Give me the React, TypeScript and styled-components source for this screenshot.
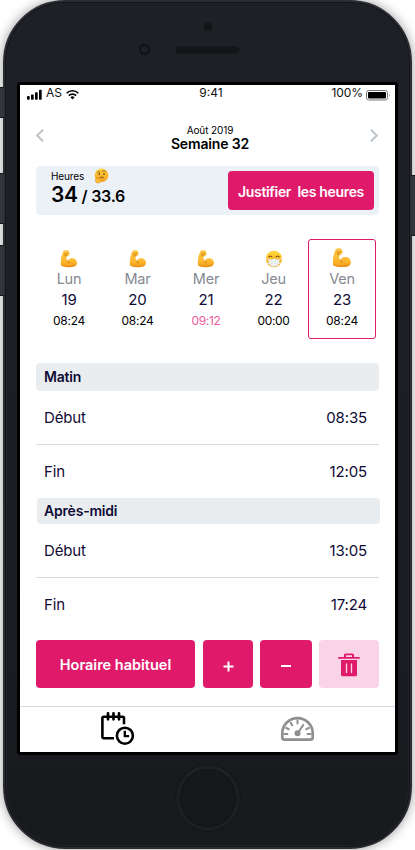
import React from "react";
import styled, { createGlobalStyle, css } from "styled-components";

const pink = "#df1a6b";
const navy = "#100b36";

const Global = createGlobalStyle`
  * { box-sizing: border-box; }
  html, body { margin: 0; padding: 0; background: #fff; overflow: hidden; }
  body { font-family: Inter, "Liberation Sans", sans-serif; color: #000; }
  button { font-family: inherit; border: 0; padding: 0; cursor: pointer; }
  svg { display: block; flex: none; overflow: visible; }
`;

const Stage = styled.div`
  position: relative;
  width: 415px;
  height: 850px;
  overflow: hidden;
  padding-left: 3px;
`;

const SideButton = styled.i<{ $side: "left" | "right"; $top: number; $height: number }>`
  position: absolute;
  ${(p) => p.$side}: 0;
  top: ${(p) => p.$top}px;
  width: 4px;
  height: ${(p) => p.$height}px;
  background: #34353b;
  border-top: 1px solid #17181c;
  border-bottom: 1px solid #17181c;
`;

const Body = styled.div`
  position: relative;
  width: 409px;
  height: 849px;
  border-radius: 62px;
  background: linear-gradient(#1f2025, #1b1c21 80%, #18191d);
  border: 2px solid #2b2d34;
  box-shadow: inset 0 0 0 1px #131417, inset 0 0 0 2px #202227, 0 0 12px rgba(0, 0, 0, 0.4);
  padding: 0 12px;
  display: flex;
  flex-direction: column;
`;

const TopBezel = styled.div`
  height: 80px;
  flex: none;
`;

const Screen = styled.div`
  width: 381px;
  height: 673px;
  flex: none;
  border: 3px solid #000;
  border-radius: 3px;
  background: #fff;
  display: flex;
  flex-direction: column;
`;

const BottomBezel = styled.div`
  flex: 1;
  display: flex;
  justify-content: center;
  padding-top: 10px;
`;

const HomeButton = styled.div`
  width: 64px;
  height: 66px;
  margin-left: 1px;
  border-radius: 50%;
  background: #17181c;
  border: 4px solid #1d1e22;
  border-top-color: #1f2024;
  box-shadow: 0 0 0 1px #141518, inset 0 0 0 1px #111216;
`;

const StatusBar = styled.div`
  height: 18px;
  display: flex;
  align-items: flex-start;
  justify-content: space-between;
  padding: 0 5px 0 7px;
  font-size: 12px;
  line-height: 16px;
  color: #111;
`;

const StatusSide = styled.div<{ $end?: boolean }>`
  width: 120px;
  display: flex;
  justify-content: ${(p) => (p.$end ? "flex-end" : "flex-start")};
  gap: ${(p) => (p.$end ? "3px" : "4px")};
  letter-spacing: ${(p) => (p.$end ? "-0.1px" : "0")};
`;

const StatusTime = styled.span`
  margin-left: 5px;
`;

const WeekNav = styled.header`
  height: 63px;
  display: flex;
  justify-content: space-between;
  padding: 26px 17px 0 16px;
`;

const NavButton = styled.button`
  background: none;
  height: 13px;
`;

const WeekTitle = styled.div`
  margin: -6px 0 0 6px;
  display: flex;
  flex-direction: column;
  align-items: center;
`;

const Month = styled.span`
  font-size: 10px;
  line-height: 14px;
  letter-spacing: -0.1px;
`;

const Week = styled.strong`
  font-size: 14px;
  line-height: 14px;
  font-weight: 600;
  letter-spacing: -0.15px;
`;

const Summary = styled.section`
  height: 49px;
  margin: 0 16px;
  padding: 5px 5px 5px 15px;
  border-radius: 4px;
  background: #ecf1f8;
  display: flex;
  justify-content: space-between;
`;

const SummaryLabel = styled.div`
  display: flex;
  gap: 10px;
  height: 12px;
  font-size: 10px;
  line-height: 12px;
  margin-top: -1px;
  letter-spacing: -0.1px;

  svg {
    margin-top: -2px;
  }
`;

const Total = styled.div`
  font-weight: 600;
  font-size: 16px;
  line-height: 24px;
  margin-top: 1px;
  white-space: pre;
  letter-spacing: -0.25px;
`;

const TotalDone = styled.span`
  font-size: 21px;
  letter-spacing: -0.3px;
`;

const buttonBase = css`
  background: ${pink};
  color: #fff;
  border-radius: 4px;
  font-weight: 600;
  font-size: 14px;
`;

const JustifyButton = styled.button`
  ${buttonBase}
  width: 146px;
  height: 39px;
  white-space: pre;
  padding-top: 2px;
  font-weight: 600;
  letter-spacing: -0.33px;
`;

const Days = styled.section`
  height: 100px;
  margin: 24px 19px 0 15px;
  display: grid;
  grid-template-columns: 68px 69px 68px 67px 69px;
  & > :last-child {
    margin-left: 1px;
  }
`;

const DayCard = styled.div<{ $selected?: boolean }>`
  border: 1px solid ${(p) => (p.$selected ? pink : "transparent")};
  border-radius: 3px;
  display: flex;
  flex-direction: column;
  align-items: center;
  padding-top: ${(p) => (p.$selected ? "8px" : "10px")};
`;

const Mood = styled.div<{ $selected?: boolean }>`
  height: ${(p) => (p.$selected ? "21px" : "19px")};
`;

const DayName = styled.span`
  font-size: 14.5px;
  line-height: 20px;
  color: #858991;
  letter-spacing: -0.2px;
`;

const DayNumber = styled.span`
  font-size: 15px;
  line-height: 21px;
  color: ${navy};
  letter-spacing: -0.15px;
`;

const DayHours = styled.span<{ $over?: boolean }>`
  font-size: 12px;
  line-height: 21px;
  color: ${(p) => (p.$over ? "#ec5a9c" : "#000")};
  letter-spacing: -0.3px;
`;

const Period = styled.section`
  margin-left: 16px;
  width: 343px;
`;

const PeriodTitle = styled.h2<{ $compact?: boolean }>`
  margin: 0 0 0 ${(p) => (p.$compact ? 1 : 0)}px;
  width: 343px;
  height: ${(p) => (p.$compact ? 26 : 28)}px;
  line-height: ${(p) => (p.$compact ? 26 : 28)}px;
  padding-left: ${(p) => (p.$compact ? 7 : 8)}px;
  border-radius: 4px;
  background: #e9edf0;
  color: ${navy};
  font-size: 14px;
  font-weight: 600;
  letter-spacing: -0.2px;
`;

const TimeRow = styled.div<{ $divided?: boolean }>`
  display: flex;
  justify-content: space-between;
  align-items: center;
  height: ${(p) => (p.$divided ? 54 : 53)}px;
  padding: 0 12px ${(p) => (p.$divided ? 0 : 1)}px 8px;
  border-bottom: ${(p) => (p.$divided ? "1px solid #d5dbe3" : "0")};
  color: ${navy};
  font-size: 15px;
  letter-spacing: -0.15px;
`;

const Actions = styled.div`
  margin: 9px 16px 0;
  height: 48px;
  display: flex;
`;

const ActionButton = styled.button<{ $width: number; $gap: number; $label?: boolean; $soft?: boolean }>`
  ${buttonBase}
  width: ${(p) => p.$width}px;
  margin-right: ${(p) => p.$gap}px;
  background: ${(p) => (p.$soft ? "#f9d4e6" : pink)};
  display: flex;
  align-items: center;
  justify-content: center;
  padding-top: ${(p) => (p.$label ? 1 : p.$soft ? 2 : 4)}px;
  font-size: 14.5px;
`;

const TabBar = styled.nav`
  margin-top: 18px;
  flex: 1;
  border-top: 1px solid #d3dbe4;
  display: flex;
  padding-left: 81px;
  gap: 146px;
`;

const Tab = styled.a<{ $top: number }>`
  padding-top: ${(p) => p.$top}px;
`;

const BezelDetails = styled.svg`
  position: absolute;
  left: 130px;
  top: 14px;
`;

const Hardware = () => (
  <BezelDetails width="112" height="46">
    <circle cx="73" cy="11" r="5" fill="#141519" stroke="#292a2f" strokeWidth=".5" />
    <circle cx="9.5" cy="33.5" r="6.2" fill="#121317" stroke="#27282d" strokeWidth=".6" />
    <circle cx="9.5" cy="33.5" r="3.3" fill="#1b222a" />
    <rect x="40" y="30" width="65" height="8" rx="4" fill="#141519" stroke="#27282d" strokeWidth=".5" />
  </BezelDetails>
);

const Signal = () => (
  <svg width="15" height="15" fill="#000">
    <rect x="0" y="11" width="2.7" height="3.7" rx=".7" />
    <rect x="4" y="9.5" width="2.7" height="5.2" rx=".7" />
    <rect x="8" y="7.3" width="2.7" height="7.4" rx=".7" />
    <rect x="12" y="4.8" width="2.7" height="9.9" rx=".7" />
  </svg>
);

const Wifi = () => (
  <svg width="13" height="15" viewBox="0 0 13 15" fill="none" stroke="#000" strokeWidth="1.6">
    <path d="M.6 8.2a8.4 8.4 0 0 1 11.8 0M2.8 10.6a5.3 5.3 0 0 1 7.4 0" />
    <path d="M4.4 12.2a3.2 3.2 0 0 1 4.2 0L6.5 14.4Z" fill="#000" stroke="none" />
  </svg>
);

const Battery = () => (
  <svg width="24" height="16">
    <rect x=".5" y="5.5" width="21" height="9.5" rx="2.2" fill="none" stroke="#777" />
    <rect x="2" y="7" width="18" height="6.6" rx="1" />
    <path d="M23 8.8q1.5 1.4 0 3Z" fill="#777" />
  </svg>
);

const Chevron = ({ right }: { right?: boolean }) => (
  <svg width="8" height="13" fill="none" stroke="#bdc4cc" strokeWidth="2">
    <path d={right ? "M1 .8 6.8 6.5 1 12.2" : "M7 .8 1.2 6.5 7 12.2"} />
  </svg>
);

const Arm = ({ size = 18 }: { size?: number }) => (
  <svg width={size} height={size} viewBox="0 0 18 18">
    <defs>
      <linearGradient id="armFill" x1="0" y1="0" x2="0" y2="1">
        <stop offset="0" stopColor="#fdc443" />
        <stop offset=".7" stopColor="#fdb62c" />
        <stop offset="1" stopColor="#ee9413" />
      </linearGradient>
    </defs>
    <path
      d="M3.200 1.400C4.300.3 6.500 0 7.900.6 9.200 1.200 9.900 3.200 9.300 4.700 8.800 5.900 7.600 6.400 6.600 6.100 6.300 7.800 6.500 9.600 7.300 11 8.300 9.300 10 8.200 12.100 8.200 15 8.200 17 10.400 17 13.100 17 15.900 14.200 17.200 9.600 17.200 5.700 17.200 2.600 16.600 1 15.300.3 10.600 1.300 6 3.200 1.400Z"
      fill="url(#armFill)"
    />
    <path d="M4.700 3.400c.8.9 2 1 3 .2M6.600 6.100 4.900 5.300M7.300 11c.4 1 1.100 1.600 2.200 1.800" fill="none" stroke="#bd6e0d" strokeWidth=".8" strokeLinecap="round" />
    <path d="M1.500 15.400c3.900 1.700 10 1.900 14-.1" fill="none" stroke="#dc8616" strokeWidth=".7" />
  </svg>
);

const Masked = () => (
  <svg width="18" height="18" viewBox="0 0 18 18">
    <defs>
      <linearGradient id="faceFill" x1="0" y1="0" x2="0" y2="1">
        <stop offset="0" stopColor="#ffd93c" />
        <stop offset="1" stopColor="#f5a51c" />
      </linearGradient>
    </defs>
    <circle cx="9" cy="9" r="8.2" fill="url(#faceFill)" />
    <path d="M3.600 6.800q1.700-1.900 3.500 0M10.900 6.800q1.800-1.900 3.500 0" fill="none" stroke="#694013" strokeWidth="1" strokeLinecap="round" />
    <path d="M1 8.500 4.300 10.100M17 8.500 13.700 10.100M1.900 13 5 13.800M16.100 13 13 13.800" stroke="#edf1f3" strokeWidth=".9" />
    <path d="M3.900 9.800Q6.800 9.700 9 8.800q2.200.9 5.100 1v3.800Q12.600 16.300 9 16.400 5.400 16.300 3.900 13.600Z" fill="#f2f5f8" stroke="#cbd1d8" strokeWidth=".4" />
    <path d="M5 11.700h8M5 13.500h8" stroke="#d7dde2" strokeWidth=".5" />
  </svg>
);

const Thinking = () => (
  <svg width="15" height="15" viewBox="0 0 15 15">
    <defs>
      <linearGradient id="thinkFill" x1="0" y1="0" x2="0" y2="1">
        <stop offset="0" stopColor="#ffd43b" />
        <stop offset="1" stopColor="#f5a020" />
      </linearGradient>
    </defs>
    <circle cx="7.600" cy="7.200" r="6.800" fill="url(#thinkFill)" />
    <path d="M3.500 4.100q1.300-.8 2.500-.1M8.400 3.100q1.800-1 3.500.3" fill="none" stroke="#805020" strokeWidth=".8" strokeLinecap="round" />
    <ellipse cx="5.200" cy="5.900" rx=".7" ry="1" fill="#593711" />
    <ellipse cx="10" cy="5.900" rx=".7" ry="1" fill="#593711" />
    <path d="M5.800 9.300q2-.8 3.900.3" fill="none" stroke="#74430f" strokeWidth=".8" strokeLinecap="round" />
    <path d="M2.200 9.300c.5-.4 1 .1 1 1l.2.800 3.900-1.200c1-.2 1.200.8.3 1.200l-1.200.5c1.100.7.700 3.100-1.400 3.300-2.100.3-3.600-.4-3.700-2.300Z" fill="#ffbf3b" stroke="#d47c14" strokeWidth=".5" />
  </svg>
);

const Plus = () => (
  <svg width="11" height="11" stroke="#fff" strokeWidth="2">
    <path d="M5.500 .5v10M.5 5.500h10" />
  </svg>
);

const Minus = () => (
  <svg width="10" height="11" stroke="#fff" strokeWidth="2">
    <path d="M0 5h10" />
  </svg>
);

const Trash = () => (
  <svg width="22" height="24" viewBox="0 0 22 24" fill={pink}>
    <path d="M6 4V2Q6 .5 7.500.5h7Q16 .5 16 2v2h5q.9 0 .9.900T21 5.800H1Q.1 5.800.1 4.900T1 4Zm2 0h6V2.300H8Z" fillRule="evenodd" />
    <path d="M3 7h16v14.700q0 1.600-1.600 1.600H4.600Q3 23.300 3 21.700Z" />
    <path d="M8.500 11v8.600M13.500 11v8.600" stroke="#f9d4e6" strokeWidth="1.300" strokeLinecap="round" />
  </svg>
);

const CalendarClock = () => (
  <svg width="34" height="34" viewBox="0 0 34 34" fill="none" stroke="#000" strokeWidth="2.600">
    <path d="M13 26.200H2.900Q1.400 26.200 1.400 24.700V6.300Q1.400 4.800 2.900 4.800H21.500Q23 4.800 23 6.300V12.300" />
    <path d="M7 1.300v6M12.500 1.300v6M18 1.300v6" strokeWidth="2.700" strokeLinecap="round" />
    <circle cx="23.900" cy="23.700" r="8" strokeWidth="2.600" />
    <path d="M23.800 18.800v5.300h4.300" strokeWidth="2.300" />
  </svg>
);

const Gauge = () => (
  <svg width="33" height="24" viewBox="0 0 33 24" fill="none" stroke="#8f8f8f" strokeWidth="2">
    <path d="M1.300 16.300a15.200 15.200 0 0 1 30.400 0v3.900q0 2.500-2.500 2.500H3.800q-2.500 0-2.500-2.500Z" strokeWidth="2.700" />
    <path d="M2.500 17h4.700M25.800 17h4.700M4.500 10.500l4 2.100M28.500 10.500l-4 2.100M9.300 5l2.300 3.900M16.500 2.500v4.700M22.700 7.300l-6 9" />
    <circle cx="16.500" cy="16.300" r="3" fill="#8f8f8f" stroke="none" />
  </svg>
);

const days = [
  { name: "Lun", number: 19, hours: "08:24" },
  { name: "Mar", number: 20, hours: "08:24" },
  { name: "Mer", number: 21, hours: "09:12", over: true },
  { name: "Jeu", number: 22, hours: "00:00", sick: true },
  { name: "Ven", number: 23, hours: "08:24", selected: true },
];

const periods = [
  { title: "Matin", start: "08:35", end: "12:05" },
  { title: "Après-midi", start: "13:05", end: "17:24", compact: true },
];

const Schedule = styled.div`
  margin-top: 24px;
`;

export default function App() {
  return (
    <Stage>
      <Global />
      <Body>
        <Hardware />
        <TopBezel />
        <Screen>
          <StatusBar>
            <StatusSide>
              <Signal />
              <span>AS</span>
              <Wifi />
            </StatusSide>
            <StatusTime>9:41</StatusTime>
            <StatusSide $end>
              <span>100%</span>
              <Battery />
            </StatusSide>
          </StatusBar>
          <WeekNav>
            <NavButton aria-label="Semaine précédente"><Chevron /></NavButton>
            <WeekTitle>
              <Month>Août 2019</Month>
              <Week>Semaine 32</Week>
            </WeekTitle>
            <NavButton aria-label="Semaine suivante"><Chevron right /></NavButton>
          </WeekNav>
          <Summary>
            <div>
              <SummaryLabel>Heures <Thinking /></SummaryLabel>
              <Total><TotalDone>34</TotalDone> / 33.6</Total>
            </div>
            <JustifyButton>{"Justifier  les heures"}</JustifyButton>
          </Summary>
          <Days>
            {days.map((d) => (
              <DayCard key={d.name} $selected={d.selected}>
                <Mood $selected={d.selected}>
                  {d.sick ? <Masked /> : <Arm size={d.selected ? 20 : 18} />}
                </Mood>
                <DayName>{d.name}</DayName>
                <DayNumber>{d.number}</DayNumber>
                <DayHours $over={d.over}>{d.hours}</DayHours>
              </DayCard>
            ))}
          </Days>
          <Schedule>
            {periods.map((p) => (
              <Period key={p.title}>
                <PeriodTitle $compact={p.compact}>{p.title}</PeriodTitle>
                <TimeRow $divided><span>Début</span><span>{p.start}</span></TimeRow>
                <TimeRow><span>Fin</span><span>{p.end}</span></TimeRow>
              </Period>
            ))}
          </Schedule>
          <Actions>
            <ActionButton $width={159} $gap={8} $label>Horaire habituel</ActionButton>
            <ActionButton $width={50} $gap={7} aria-label="Ajouter"><Plus /></ActionButton>
            <ActionButton $width={52} $gap={7} aria-label="Retirer"><Minus /></ActionButton>
            <ActionButton $width={60} $gap={0} $soft aria-label="Supprimer"><Trash /></ActionButton>
          </Actions>
          <TabBar>
            <Tab $top={5}><CalendarClock /></Tab>
            <Tab $top={10}><Gauge /></Tab>
          </TabBar>
        </Screen>
        <BottomBezel><HomeButton /></BottomBezel>
      </Body>
      <SideButton $side="left" $top={87} $height={31} />
      <SideButton $side="left" $top={173} $height={51} />
      <SideButton $side="left" $top={245} $height={51} />
      <SideButton $side="right" $top={175} $height={61} />
    </Stage>
  );
}
